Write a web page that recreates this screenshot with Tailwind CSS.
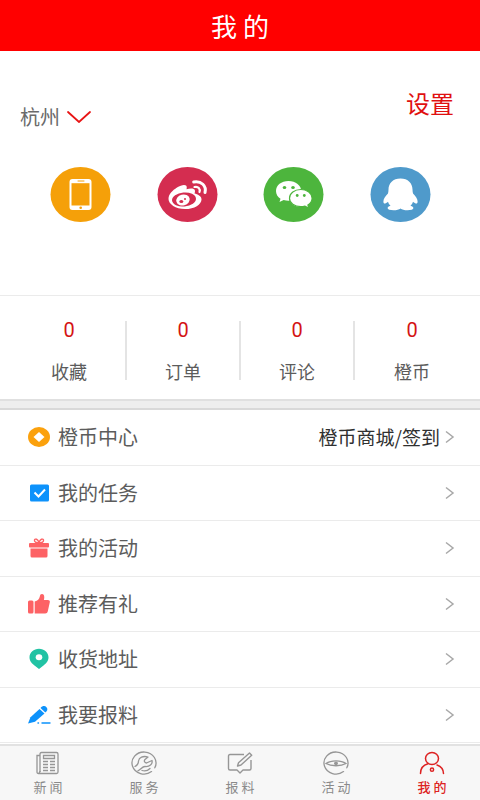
<!DOCTYPE html>
<html lang="zh-CN">
<head>
<meta charset="utf-8">
<meta name="viewport" content="width=device-width, initial-scale=1">
<title>我的</title>
<script src="https://cdn.jsdelivr.net/npm/@tailwindcss/browser@4"></script>
</head>
<body class="flex min-h-screen flex-col bg-white font-['Noto_Sans_CJK_SC',sans-serif] text-[#5c5c5c]">
<header class="flex h-[51px] items-center justify-center bg-[#ff0000] pt-px">
  <h1 class="text-[26px] leading-8 text-white">我 的</h1>
</header>

<main class="flex flex-1 flex-col">
  <section class="flex h-[245px] flex-col border-b border-[#ebebeb]">
    <div class="flex items-start justify-between pr-[26px] pl-5 pt-9">
      <button type="button" class="mt-4 flex items-center gap-[7px] text-[20px] leading-7 text-[#6a6a6a]">杭州
        <svg class="h-3 w-6" viewBox="0 0 24 12" fill="none" stroke="#e81414" stroke-width="1.8" stroke-linecap="round"><path d="M1 1l11 10L23 1"/></svg>
      </button>
      <a href="#settings" class="text-[24px] leading-8 text-[#e01010]">设置</a>
    </div>
    <div class="mt-9 flex justify-between pr-[49px] pl-[50px]">
      <button type="button" aria-label="手机登录">
        <svg class="h-[55px] w-[61px]" viewBox="0 0 61 55"><ellipse cx="30.500" cy="27.500" rx="30" ry="27.500" fill="#f5a009"/><rect x="19.500" y="12" width="22" height="31" rx="3" fill="#fff"/><path d="M21.500 16.200h18v22.300h-18z" fill="#f5a009"/><path d="M28 14h6" stroke="#f5a009" stroke-linecap="round"/><circle cx="30.700" cy="40.700" r="1.300" fill="#f5a009"/></svg>
      </button>
      <button type="button" aria-label="微博登录">
        <svg class="h-[55px] w-[61px]" viewBox="0 0 61 55"><ellipse cx="30.500" cy="27.500" rx="30" ry="27.500" fill="#d42d50"/><path d="M11.500 32c0-5 4-8.500 8.500-11.500 4-2.600 8-3.400 9.300-1.700.6.900.6 2 .2 3.500 3.500-1.200 6.800-1.300 8 .3.800 1.100.5 2.500 0 4 3 .8 7 2.300 7 5.800 0 5-7 9.600-16.500 9.600S11.500 37 11.500 32z" fill="#fff"/><ellipse cx="27" cy="32.500" rx="12" ry="7" transform="rotate(-5 27 32.500)" fill="#d42d50"/><ellipse cx="26" cy="33" rx="6.800" ry="5.500" transform="rotate(-15 26 33)" fill="#fff"/><ellipse cx="24.300" cy="34.500" rx="2" ry="1.600" fill="#d42d50"/><circle cx="28" cy="32" r="1" fill="#d42d50"/><path d="M37.500 20c3.800-.9 6 1.800 5 5" fill="none" stroke="#fff" stroke-width="2.200" stroke-linecap="round"/><path d="M36.700 15c7.700-1.400 13 4 11.300 10.500" fill="none" stroke="#fff" stroke-width="3" stroke-linecap="round"/></svg>
      </button>
      <button type="button" aria-label="微信登录">
        <svg class="h-[55px] w-[61px]" viewBox="0 0 61 55"><ellipse cx="30.500" cy="27.500" rx="30" ry="27.500" fill="#4db53d"/><path d="M25.500 14C18.300 14 13 18.300 13 24c0 3.300 1.700 5.900 4.500 7.700L16.500 35l4.200-2c1.500.5 3.100.8 4.800.8 7.200 0 12.700-4.300 12.700-9.800S32.700 14 25.500 14z" fill="#fff"/><path d="M37.800 22.500c-6.300 0-11.300 3.700-11.300 8.700s5 8.500 11.300 8.500c1.500 0 2.800-.2 4.200-.6l3.900 2.100-1-3.200c2.700-1.700 4.200-4 4.200-6.800 0-5-5-8.700-11.300-8.700z" fill="#fff" stroke="#4db53d" stroke-width="1.200"/><g fill="#4db53d"><ellipse cx="21.500" cy="20.500" rx="1.800" ry="1.500"/><ellipse cx="30" cy="20.500" rx="1.800" ry="1.500"/><circle cx="34.200" cy="28.500" r="1.400"/><circle cx="41.300" cy="28.500" r="1.400"/></g></svg>
      </button>
      <button type="button" aria-label="QQ登录">
        <svg class="h-[55px] w-[61px]" viewBox="0 0 61 55"><ellipse cx="30.500" cy="27.500" rx="30" ry="27.500" fill="#4f9acb"/><path d="M30.500 11.500c-7.500 0-12 4.800-12 11 0 1.600-.2 2.700-.5 4-2.600 2.600-4.600 5.600-4.600 8 0 1.400.5 2 1.200 2 .9 0 2.200-.8 3.400-1.800.4 1.500 1.300 2.900 2.500 4-2 .6-2.900 1.400-2.900 2.400 0 1.500 2.400 2.200 6 2.200 3 0 5.400-.6 6.900-1.800 1.500 1.200 3.900 1.800 6.900 1.800 3.600 0 6-.7 6-2.200 0-1-.9-1.800-2.900-2.400 1.200-1.100 2.100-2.500 2.500-4 1.200 1 2.500 1.800 3.400 1.800.7 0 1.200-.6 1.200-2 0-2.400-2-5.400-4.600-8-.3-1.300-.5-2.400-.5-4 0-6.200-4.500-11-12-11z" fill="#fff"/></svg>
      </button>
    </div>
  </section>

  <section class="grid grid-cols-4 pr-[11px] pl-[13px] pt-[25px] pb-[19px] text-center">
    <a href="#favorites" class="flex h-[59px] flex-col justify-between border-r-2 border-[#e4e4e4] text-[18px] leading-[18px]"><span class="font-[Roboto,sans-serif] text-[20px] text-[#d41414]">0</span><span>收藏</span></a>
    <a href="#orders" class="flex h-[59px] flex-col justify-between border-r-2 border-[#e4e4e4] text-[18px] leading-[18px]"><span class="font-[Roboto,sans-serif] text-[20px] text-[#d41414]">0</span><span>订单</span></a>
    <a href="#comments" class="flex h-[59px] flex-col justify-between border-r-2 border-[#e4e4e4] text-[18px] leading-[18px]"><span class="font-[Roboto,sans-serif] text-[20px] text-[#d41414]">0</span><span>评论</span></a>
    <a href="#coins" class="flex h-[59px] flex-col justify-between text-[18px] leading-[18px]"><span class="font-[Roboto,sans-serif] text-[20px] text-[#d41414]">0</span><span>橙币</span></a>
  </section>

  <div class="h-[11px] border-y-2 border-t-[#e0e0e0] border-b-[#d9d9d9] bg-[#eeeeee]"></div>

  <nav aria-label="功能" class="flex flex-1 flex-col divide-y divide-[#ebebeb] border-b border-[#ebebeb] text-[20px] leading-7">
    <a href="#coin-center" class="flex min-h-[52px] flex-1 items-center gap-2 pr-6 pl-7">
      <svg class="size-[22px]" viewBox="0 0 22 22"><ellipse cx="11" cy="11" rx="11" ry="10" fill="#fba10d"/><path d="M11 6l5.500 5-5.500 5-5.500-5z" fill="#fff"/></svg>
      <span>橙币中心</span><span class="ml-auto text-[19px] text-[#303030]">橙币商城/签到</span>
      <svg class="-ml-1 h-[14px] w-3" viewBox="0 0 12 14" fill="none" stroke="#a8a8a8" stroke-width="1.500"><path d="M2 1.500l7 5.500-7 5.500"/></svg>
    </a>
    <a href="#tasks" class="flex min-h-[52px] flex-1 items-center gap-2 pr-6 pl-7">
      <svg class="size-[22px]" viewBox="0 0 22 22"><rect x="2" y="2.500" width="19" height="17" rx="1.500" fill="#0d92fb"/><path d="M6.500 10.500l4 4L17 7.500" fill="none" stroke="#fff" stroke-width="2"/></svg>
      <span>我的任务</span>
      <svg class="ml-auto h-[14px] w-3" viewBox="0 0 12 14" fill="none" stroke="#a8a8a8" stroke-width="1.500"><path d="M2 1.500l7 5.500-7 5.500"/></svg>
    </a>
    <a href="#activities" class="flex min-h-[52px] flex-1 items-center gap-2 pr-6 pl-7">
      <svg class="size-[22px]" viewBox="0 0 22 22"><rect x="1" y="6" width="20" height="4.500" rx="1" fill="#fd6265"/><path d="M2.500 11.500h17V19q0 1.500-1.500 1.500H4Q2.500 20.500 2.500 19z" fill="#fd6265"/><path d="M11 6C8 6 6 4.500 6.500 3s3.500-1.500 4.500 3c1-4.500 4-4.500 4.500-3S14 6 11 6z" fill="none" stroke="#fd6265" stroke-width="1.400"/></svg>
      <span>我的活动</span>
      <svg class="ml-auto h-[14px] w-3" viewBox="0 0 12 14" fill="none" stroke="#a8a8a8" stroke-width="1.500"><path d="M2 1.500l7 5.500-7 5.500"/></svg>
    </a>
    <a href="#referral" class="flex min-h-[52px] flex-1 items-center gap-2 pr-6 pl-7">
      <svg class="size-[22px]" viewBox="0 0 22 22" fill="#fd6265"><rect y="7.500" width="5.500" height="13" rx="1.500"/><path d="M6.700 8.500c3-.8 4.600-2.300 5.100-5C12.100 1.800 12.700 1 14 1c2 0 2.800 2.200 1.900 6h4c1.500 0 2.200 1 1.900 2.300l-2 9c-.4 1.500-1.200 2.200-2.600 2.200H6.700z"/></svg>
      <span>推荐有礼</span>
      <svg class="ml-auto h-[14px] w-3" viewBox="0 0 12 14" fill="none" stroke="#a8a8a8" stroke-width="1.500"><path d="M2 1.500l7 5.500-7 5.500"/></svg>
    </a>
    <a href="#address" class="flex min-h-[52px] flex-1 items-center gap-2 pr-6 pl-7">
      <svg class="size-[22px]" viewBox="0 0 22 22"><path d="M11 .800c5.300 0 9.500 3.700 9.500 8.500 0 4-2.800 6.500-5 8.200L11 21l-4.500-3.500c-2.200-1.700-5-4.200-5-8.200C1.500 4.500 5.700.800 11 .800z" fill="#22c3a4"/><ellipse cx="11" cy="9.300" rx="3.300" ry="3" fill="#fff"/></svg>
      <span>收货地址</span>
      <svg class="ml-auto h-[14px] w-3" viewBox="0 0 12 14" fill="none" stroke="#a8a8a8" stroke-width="1.500"><path d="M2 1.500l7 5.500-7 5.500"/></svg>
    </a>
    <a href="#report" class="flex min-h-[52px] flex-1 items-center gap-2 pr-6 pl-7">
      <svg class="size-[22px] overflow-visible" viewBox="0 0 22 22" fill="#0d92fb"><path d="M0 19.500l2.500-6.200L11.500 5l5 4.500-9.500 8.300z"/><path d="M12.500 4c2-2.500 4.500-2.500 6-.8s1 3.600-1.200 5.300z"/><path d="M10 19h.5M14 19h8" stroke="#0d92fb" stroke-width="1.400" stroke-linecap="round"/></svg>
      <span>我要报料</span>
      <svg class="ml-auto h-[14px] w-3" viewBox="0 0 12 14" fill="none" stroke="#a8a8a8" stroke-width="1.500"><path d="M2 1.500l7 5.500-7 5.500"/></svg>
    </a>
  </nav>
</main>

<nav aria-label="主导航" class="mt-px grid h-14 grid-cols-5 border-t-2 border-[#e2e2e2] bg-[#f7f7f7] text-[13px] leading-5 text-[#8a8a8a]">
  <a href="#news" class="flex flex-col items-center gap-0.5 pt-[5px]">
    <svg class="h-6 w-[26px]" viewBox="0 0 26 24" fill="none" stroke="#969696" stroke-width="1.300"><path d="M5 21V3q0-1.500 1.500-1.500h15Q23 1.500 23 3v18q0 1.500-1.500 1.500h-18Q2 22.500 2 21V4.500H5"/><path d="M3.500 22.500Q5 22 5 20"/><path d="M8.500 4.500h11v3h-11z"/><path d="M8 10.500h5M15 10.500h5M8 13.500h5M15 13.500h5M8 16.500h5M15 16.500h5M8 19.500h5M15 19.500h5"/></svg>
    <span>新 闻</span>
  </a>
  <a href="#service" class="flex flex-col items-center gap-0.5 pt-[5px]">
    <svg class="h-6 w-[26px]" viewBox="0 0 26 24" fill="none" stroke="#969696" stroke-width="1.300" stroke-linecap="round" stroke-linejoin="round"><path d="M20.500 20.600A12 11 0 1 1 23.800 16.800"/><path d="M4 15.500c3-1.500 3.500-3.500 3.500-5.500.5-3.500 4.500-5.500 9.500-4l-3.300 2.800c-.8 1.300-.2 2.800 1.800 3.200l5.500-2.500c.8 3.800-2.500 6.500-7 6-2.500 0-4 2.500-7 4.300"/><path d="M19 17.500c-2 2-5 3-8 2"/></svg>
    <span>服 务</span>
  </a>
  <a href="#tips" class="flex flex-col items-center gap-0.5 pt-[5px]">
    <svg class="h-6 w-[26px]" viewBox="0 0 26 24" fill="none" stroke="#969696" stroke-width="1.400" stroke-linejoin="round"><path d="M17 3.500H3Q1.500 3.500 1.500 5v12.500Q1.500 19 3 19h7l3 3 3-3h6.500q1.500 0 1.500-1.500V9"/><path d="M22.500 2l2.200 2.200L14 14l-3.500 1 1-3.300z"/></svg>
    <span>报 料</span>
  </a>
  <a href="#events" class="flex flex-col items-center gap-0.5 pt-[5px]">
    <svg class="h-6 w-[26px]" viewBox="0 0 26 24" fill="none" stroke="#969696" stroke-width="1.300" stroke-linecap="round"><path d="M20.500 20.600A12 11 0 1 1 23.800 16.800"/><path d="M3 12.500c5-3.600 15-3.600 20 0-5 3-15 3-20 0z"/><circle cx="13" cy="12.300" r="1.900" fill="#969696" stroke="none"/></svg>
    <span>活 动</span>
  </a>
  <a href="#me" aria-current="page" class="flex flex-col items-center gap-0.5 pt-[5px] font-medium text-[#dd2222]">
    <svg class="h-6 w-[26px]" viewBox="0 0 26 24" fill="none" stroke="#dd2222" stroke-width="1.500" stroke-linecap="round"><ellipse cx="13" cy="7.500" rx="6.500" ry="6"/><path d="M1.500 22.500c0-5 3-8.500 7.500-9.700M18 14c4 1.500 6.500 4.500 6.500 8.500"/><circle cx="13" cy="18.700" r="1.600"/></svg>
    <span>我 的</span>
  </a>
</nav>
</body>
</html>
